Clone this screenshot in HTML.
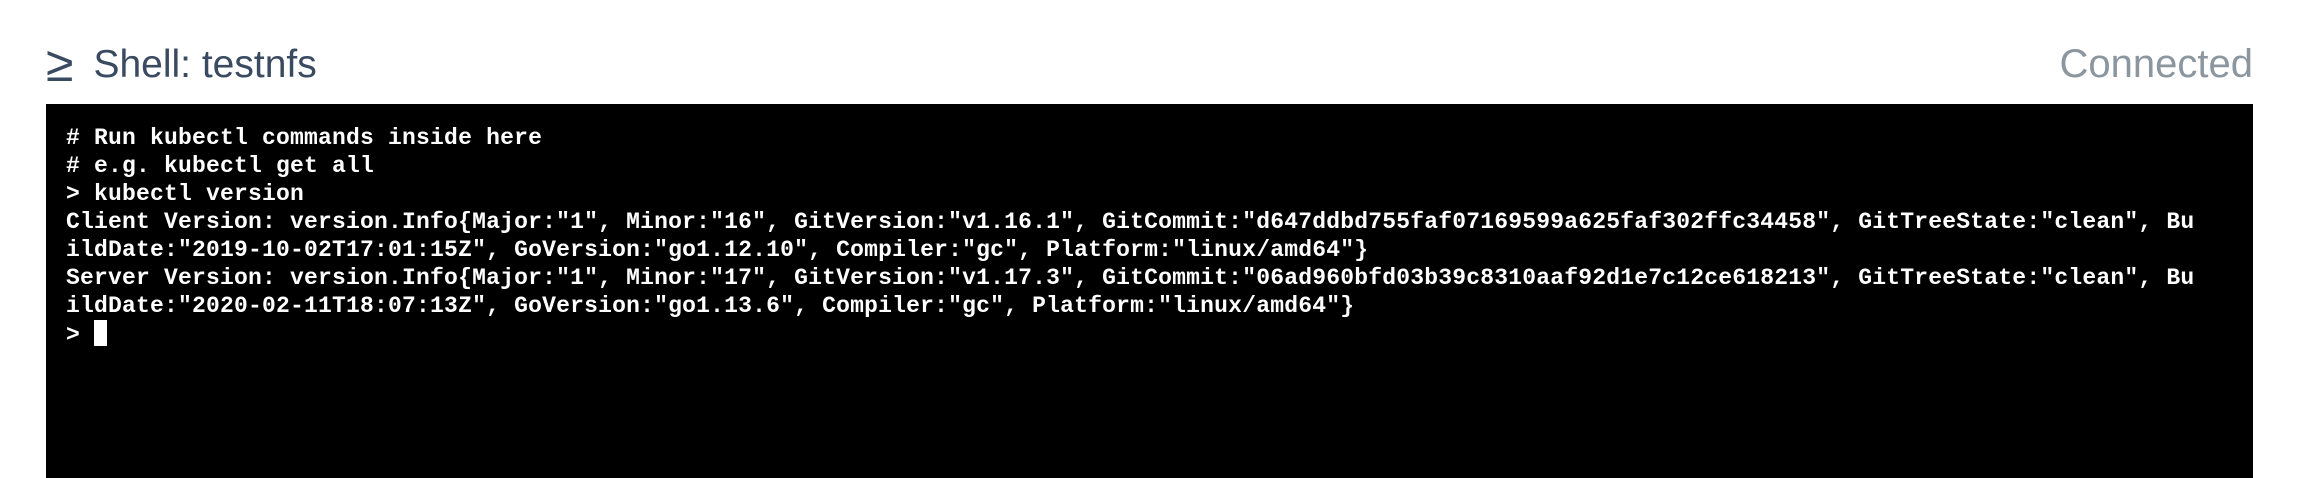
<!DOCTYPE html>
<html><head><style>
body{margin:0;width:2302px;height:478px;background:#fff;overflow:hidden;position:relative;font-family:"Liberation Sans",sans-serif}
.t{position:absolute;left:46px;top:41px;font-size:39px;color:#3a4a60;line-height:46px}
.t .g{font-size:50px;margin-right:20px;display:inline-block;vertical-align:-4px}
.c{position:absolute;right:49px;top:41px;font-size:40px;color:#8b969f;line-height:46px}
.term{position:absolute;left:46px;top:104px;width:2207px;height:374px;background:#000}
pre{margin:0;position:absolute;left:20px;top:20px;color:#fff;font-family:"Liberation Mono",monospace;font-weight:bold;font-size:23px;letter-spacing:0.2px;line-height:28px}
.cur{display:inline-block;width:13px;height:26px;background:#fff;vertical-align:-5px}
</style></head><body>
<div class="t"><span class="g">≥</span>Shell: testnfs</div>
<div class="c">Connected</div>
<div class="term"><pre># Run kubectl commands inside here
# e.g. kubectl get all
&gt; kubectl version
Client Version: version.Info{Major:"1", Minor:"16", GitVersion:"v1.16.1", GitCommit:"d647ddbd755faf07169599a625faf302ffc34458", GitTreeState:"clean", Bu
ildDate:"2019-10-02T17:01:15Z", GoVersion:"go1.12.10", Compiler:"gc", Platform:"linux/amd64"}
Server Version: version.Info{Major:"1", Minor:"17", GitVersion:"v1.17.3", GitCommit:"06ad960bfd03b39c8310aaf92d1e7c12ce618213", GitTreeState:"clean", Bu
ildDate:"2020-02-11T18:07:13Z", GoVersion:"go1.13.6", Compiler:"gc", Platform:"linux/amd64"}
&gt; <span class="cur"></span></pre></div>
</body></html>
